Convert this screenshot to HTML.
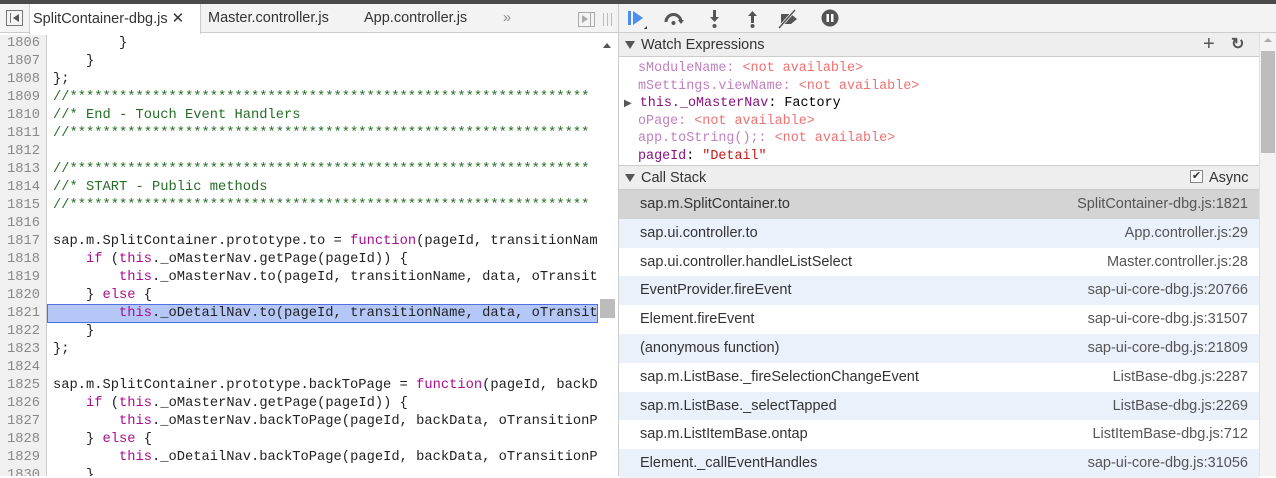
<!DOCTYPE html><html><head><style>
*{margin:0;padding:0;box-sizing:border-box}
body{width:1276px;height:476px;overflow:hidden;background:#fff;font-family:"Liberation Sans",sans-serif;position:relative}
.top{position:absolute;left:0;top:0;width:1276px;height:4px;background:#4a4a4a}
.tabs{position:absolute;left:0;top:4px;width:618px;height:29px;background:#f3f3f3;border-bottom:1px solid #ccc;font-size:14.5px;color:#333}
.tab{position:absolute;top:0;height:29px;line-height:29px}
.code{position:absolute;left:0;top:33px;width:598px;height:443px;overflow:hidden;font-family:"Liberation Mono",monospace;font-size:13.75px}
.ln{position:absolute;left:0;width:47px;height:18px;line-height:18px;text-align:right;padding-right:6px;color:#888;background:#f0f0f0;border-right:1px solid #ccc}
.cl{position:absolute;left:53px;height:18px;line-height:18px;white-space:pre;color:#222}
.c{color:#236e25}.k{color:#aa0d91}
.vs{position:absolute;left:598px;top:33px;width:20px;height:443px;background:#fff}
.split{position:absolute;left:618px;top:4px;width:1px;height:472px;background:#ccc}
.rt{position:absolute;left:619px;top:4px;width:657px;height:29px;background:#f3f3f3;border-bottom:1px solid #ccc}
.hdr{position:absolute;left:619px;width:640px;height:24px;background:#eee;border-bottom:1px solid #ccc;font-size:14.5px;color:#333;line-height:24px;padding-left:22px}
.hdr:before{content:"";position:absolute;left:6px;top:8px;border-left:5px solid transparent;border-right:5px solid transparent;border-top:8px solid #555}
.w{position:absolute;left:638px;font-family:"Liberation Mono",monospace;font-size:13.4px;line-height:17px;white-space:pre}
.p{color:#c080c0}.na{color:#f07070}.pr{color:#881280}.s{color:#c41a16}
.row{position:absolute;left:619px;width:640px;height:29px;font-size:14.5px;color:#333;line-height:29px}
.row span{position:absolute;left:21px}.row i{position:absolute;right:11px;font-style:normal;color:#555}
.rs{position:absolute;left:1259px;top:33px;width:17px;height:443px;background:#f3f3f3;border-left:1px solid #e0e0e0}
</style></head><body>
<div class="top"></div>
<div class="tabs">
<div style="position:absolute;left:6px;top:6px;width:17px;height:16px;border:1px solid #777;"></div>
<div style="position:absolute;left:10px;top:9px;width:1px;height:10px;background:#777"></div>
<div style="position:absolute;left:13px;top:10px;border-top:4px solid transparent;border-bottom:4px solid transparent;border-right:6px solid #555"></div>
<div class="tab" style="left:29px;width:172px;background:#fff;border-left:1px solid #ccc;border-right:1px solid #ccc;height:30px;padding-left:3px">SplitContainer-dbg.js <span style="font-size:15px">✕</span></div>
<div class="tab" style="left:208px">Master.controller.js</div>
<div class="tab" style="left:364px">App.controller.js</div>
<div class="tab" style="left:503px;color:#888">»</div>
<div style="position:absolute;left:578px;top:8px;width:17px;height:15px;border:1px solid #aaa"></div>
<div style="position:absolute;left:582px;top:11px;border-top:4px solid transparent;border-bottom:4px solid transparent;border-left:6px solid #aaa"></div>
<div style="position:absolute;left:590px;top:9px;width:1px;height:13px;background:#aaa"></div>
<div style="position:absolute;left:603px;top:9px;width:9px;height:13px;border-left:1px solid #bbb;border-right:1px solid #bbb"></div>
<div style="position:absolute;left:607px;top:9px;width:1px;height:13px;background:#bbb"></div>
</div>
<div class="code">
<div style="position:absolute;left:47px;top:271px;width:551px;height:19px;background:#b5c7f7;border:1px solid #5070e0"></div>
<div id="lines"></div>
</div>
<div class="vs"><div style="position:absolute;left:5px;top:10px;border-left:4px solid transparent;border-right:4px solid transparent;border-bottom:5px solid #555"></div><div style="position:absolute;left:2px;top:266px;width:15px;height:19px;background:#bcbcbc"></div></div>
<div class="split"></div>
<div class="rt">
<svg width="240" height="29" style="position:absolute;left:0;top:0">
<rect x="9" y="7" width="3" height="14" fill="#4a8ef0"/><path d="M14 7 L24 14 L14 21Z" fill="#4a8ef0"/><path d="M28 22 L25 25 L28 25Z" fill="#333"/>
<path d="M47 18 A7 7 0 0 1 62 18" stroke="#555" stroke-width="3" fill="none"/><circle cx="54.5" cy="19" r="2" fill="#555"/><path d="M59 16 L65 16 L62 20Z" fill="#555"/>
<rect x="94" y="6" width="3" height="8" fill="#555"/><path d="M91 13 L100 13 L95.5 18Z" fill="#555"/><circle cx="95.5" cy="22" r="2" fill="#555"/>
<rect x="132" y="11" width="3" height="8" fill="#555"/><path d="M129 12 L138 12 L133.5 7Z" fill="#555"/><circle cx="133.5" cy="22" r="2" fill="#555"/>
<path d="M162 10 L172 10 L178 15 L172 20 L162 20Z" fill="#555"/><path d="M160 24 L176 6" stroke="#f3f3f3" stroke-width="3"/><path d="M160 24 L176 6" stroke="#555" stroke-width="1.5"/>
<circle cx="211" cy="14" r="8.5" fill="#555"/><rect x="207.5" y="10" width="2.5" height="8" fill="#fff"/><rect x="212" y="10" width="2.5" height="8" fill="#fff"/>
</svg></div>
<div class="hdr" style="top:33px;height:24px">Watch Expressions<span style="position:absolute;left:584px;font-size:20px;top:-1px;color:#555">+</span><span style="position:absolute;left:612px;font-size:16px;color:#555;font-weight:bold">↻</span></div>
<div class="w" style="top:60px"><span class="p">sModuleName</span><span class="p">:</span> <span class="na">&lt;not available&gt;</span></div>
<div class="w" style="top:78px"><span class="p">mSettings.viewName</span><span class="p">:</span> <span class="na">&lt;not available&gt;</span></div>
<div class="w" style="top:95px;left:624px"><span style="font-size:10px;color:#555">▶</span> <span class="pr">this._oMasterNav</span>: Factory</div>
<div class="w" style="top:113px"><span class="p">oPage:</span> <span class="na">&lt;not available&gt;</span></div>
<div class="w" style="top:130px"><span class="p">app.toString();:</span> <span class="na">&lt;not available&gt;</span></div>
<div class="w" style="top:148px"><span class="pr">pageId</span>: <span class="s">"Detail"</span></div>
<div class="hdr" style="top:165px;height:25px;border-top:1px solid #ccc;line-height:24px">Call Stack<span style="position:absolute;left:571px;top:4px;width:13px;height:13px;border:1px solid #888;background:#fafafa;font-size:11px;line-height:11px;text-align:center">✔</span><span style="position:absolute;left:590px">Async</span></div>
<div id="rows"></div>
<div class="rs"><div style="position:absolute;left:4px;top:5px;border-left:4px solid transparent;border-right:4px solid transparent;border-bottom:4px solid #aaa"></div><div style="position:absolute;left:1px;top:18px;width:14px;height:102px;background:#bdbdbd"></div></div>
<script>
var S='//***************************************************************';
var L=[["1806","        }"],["1807","    }"],["1808","};"],["1809",'<span class="c">'+S+'</span>'],["1810",'<span class="c">//* End - Touch Event Handlers</span>'],["1811",'<span class="c">'+S+'</span>'],["1812",""],["1813",'<span class="c">'+S+'</span>'],["1814",'<span class="c">//* START - Public methods</span>'],["1815",'<span class="c">'+S+'</span>'],["1816",""],["1817",'sap.m.SplitContainer.prototype.to = <span class="k">function</span>(pageId, transitionNam'],["1818",'    <span class="k">if</span> (<span class="k">this</span>._oMasterNav.getPage(pageId)) {'],["1819",'        <span class="k">this</span>._oMasterNav.to(pageId, transitionName, data, oTransit'],["1820",'    } <span class="k">else</span> {'],["1821",'        <span class="k">this</span>._oDetailNav.to(pageId, transitionName, data, oTransit'],["1822","    }"],["1823","};"],["1824",""],["1825",'sap.m.SplitContainer.prototype.backToPage = <span class="k">function</span>(pageId, backD'],["1826",'    <span class="k">if</span> (<span class="k">this</span>._oMasterNav.getPage(pageId)) {'],["1827",'        <span class="k">this</span>._oMasterNav.backToPage(pageId, backData, oTransitionP'],["1828",'    } <span class="k">else</span> {'],["1829",'        <span class="k">this</span>._oDetailNav.backToPage(pageId, backData, oTransitionP'],["1830","    }"]];
var h="";L.forEach(function(l,i){var t=2+i*18;h+='<div class="ln" style="top:'+t+'px">'+l[0]+'</div><div class="cl" style="top:'+t+'px">'+l[1]+'</div>';});
document.getElementById("lines").innerHTML=h;
var R=[["sap.m.SplitContainer.to","SplitContainer-dbg.js:1821"],["sap.ui.controller.to","App.controller.js:29"],["sap.ui.controller.handleListSelect","Master.controller.js:28"],["EventProvider.fireEvent","sap-ui-core-dbg.js:20766"],["Element.fireEvent","sap-ui-core-dbg.js:31507"],["(anonymous function)","sap-ui-core-dbg.js:21809"],["sap.m.ListBase._fireSelectionChangeEvent","ListBase-dbg.js:2287"],["sap.m.ListBase._selectTapped","ListBase-dbg.js:2269"],["sap.m.ListItemBase.ontap","ListItemBase-dbg.js:712"],["Element._callEventHandles","sap-ui-core-dbg.js:31056"]];
h="";R.forEach(function(r,i){var t=190+i*28.8;var bg=i==0?"#d4d4d4":(i%2?"#eaf1fb":"#fff");h+='<div class="row" style="top:'+t+'px;background:'+bg+'"><span>'+r[0]+'</span><i>'+r[1]+'</i></div>';});
document.getElementById("rows").innerHTML=h;
</script>
</body></html>
